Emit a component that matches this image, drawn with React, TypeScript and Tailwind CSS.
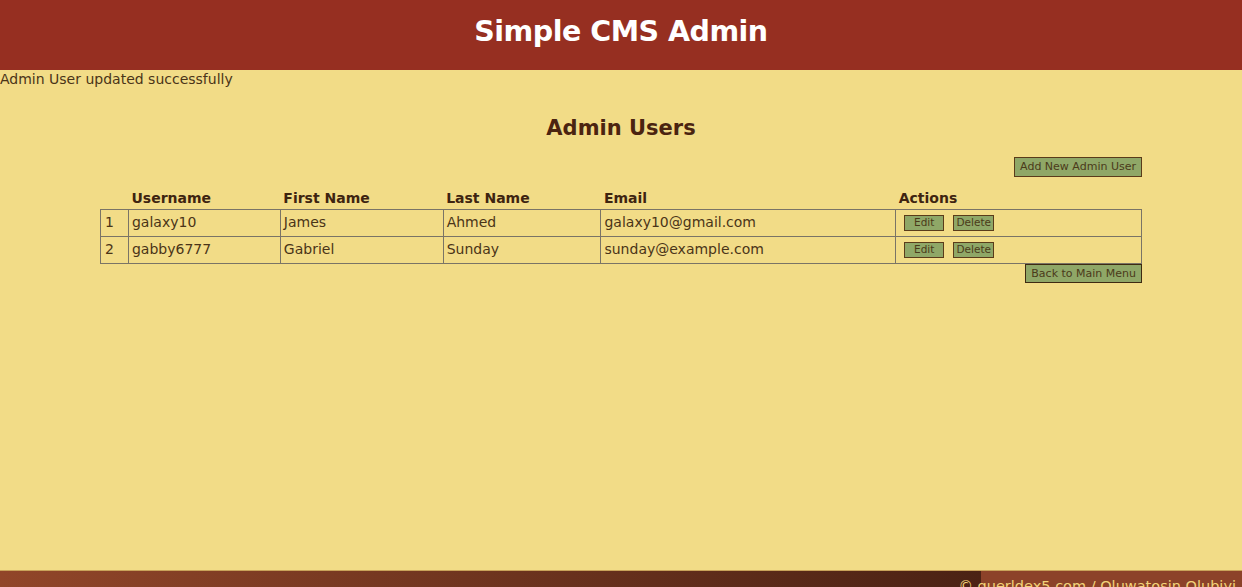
const users = [
  { id: 1, username: "galaxy10", first: "James", last: "Ahmed", email: "galaxy10@gmail.com" },
  { id: 2, username: "gabby6777", first: "Gabriel", last: "Sunday", email: "sunday@example.com" },
];

const font = "font-['DejaVu_Sans',sans-serif]";

function SmallButton({ label, className = "" }: { label: string; className?: string }) {
  return (
    <button
      className={`h-4 bg-[#8fa767] border border-[#5a3b1a] text-[10.5px] leading-none text-[#4b3a1a] ${className}`}
    >
      {label}
    </button>
  );
}

export default function App() {
  return (
    <div className={`${font} min-h-[587px] bg-[#f2dc87] text-[#4a3418]`}>
      {/* Header */}
      <header className="h-[70px] bg-[#962f21] flex items-center justify-center pb-[6px]">
        <h1 className="text-[28.5px] font-bold text-white tracking-[-0.5px]">
          Simple CMS Admin
        </h1>
      </header>

      <main className="h-[500px]">
        <p className="text-[14px] leading-[18px]">Admin User updated successfully</p>

        <h2 className="mt-[25px] text-center text-[21px] font-bold text-[#4b2410]">
          Admin Users
        </h2>

        <div className="w-[1042px] mx-auto">
          <div className="flex justify-end mt-[12px]">
            <button className="h-5 px-[5px] bg-[#8fa767] border border-[#5a3b1a] text-[11px] leading-none text-[#4b3a1a]">
              Add New Admin User
            </button>
          </div>

          <table className="w-full mt-[11px] border-collapse text-[14px] text-[#4a3418]">
            <colgroup>
              <col className="w-[28px]" />
              <col className="w-[152px]" />
              <col className="w-[163px]" />
              <col className="w-[158px]" />
              <col className="w-[295px]" />
              <col className="w-[246px]" />
            </colgroup>
            <thead>
              <tr className="h-[20px] text-left text-[#3e2410]">
                <th></th>
                <th className="px-[3px] font-bold">Username</th>
                <th className="px-[3px] font-bold">First Name</th>
                <th className="px-[3px] font-bold">Last Name</th>
                <th className="px-[3px] font-bold">Email</th>
                <th className="px-[3px] font-bold">Actions</th>
              </tr>
            </thead>
            <tbody>
              {users.map((u) => (
                <tr key={u.id} className="h-[27px]">
                  <td className="border border-[#7a7466] px-[4px] align-top pt-[2px]">{u.id}</td>
                  <td className="border border-[#7a7466] px-[3px] align-top pt-[2px]">{u.username}</td>
                  <td className="border border-[#7a7466] px-[3px] align-top pt-[2px]">{u.first}</td>
                  <td className="border border-[#7a7466] px-[3px] align-top pt-[2px]">{u.last}</td>
                  <td className="border border-[#7a7466] px-[3px] align-top pt-[2px]">{u.email}</td>
                  <td className="border border-[#7a7466] pl-[8px]">
                    <div className="flex gap-[9px] items-center">
                      <SmallButton label="Edit" className="w-10" />
                      <SmallButton label="Delete" className="w-[41px]" />
                    </div>
                  </td>
                </tr>
              ))}
            </tbody>
          </table>

          <div className="flex justify-end">
            <button className="h-[19px] px-[5px] bg-[#8fa767] border border-[#3e2a12] text-[11px] leading-none text-[#4b3a1a]">
              Back to Main Menu
            </button>
          </div>
        </div>
      </main>

      {/* Footer */}
      <footer className="h-[40px] border-t border-[#c9a35a] bg-[linear-gradient(to_right,#914629_0%,#4b2214_79%,#8c4229_79%,#8c4229_100%)] flex justify-end pr-[6px]">
        <span className="text-[14.5px] text-[#f2d37a] pt-[5px]">© querldex5.com / Oluwatosin Olubiyi</span>
      </footer>
    </div>
  );
}
